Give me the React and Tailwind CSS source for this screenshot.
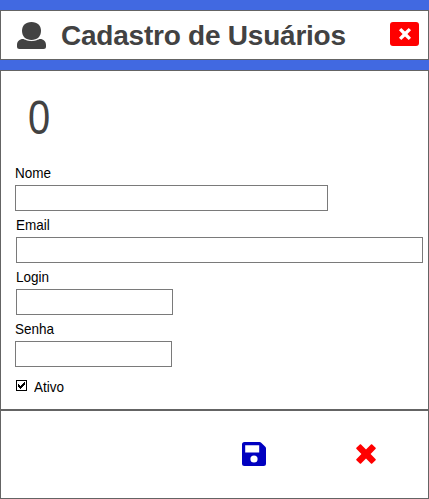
import React from 'react';

function UserIcon() {
  return (
    <svg className="mt-[11px] ml-4 h-[27px] w-[29px] shrink-0" viewBox="0 0 29 27" fill="#424242">
      <path d="M6 17C8 17 10 18.9 14.5 18.9C19 18.9 21 17 23 17C26.5 17 29 19.4 29 23V24.5Q29 27 26.5 27H2.5Q0 27 0 24.5V23C0 19.4 2.5 17 6 17Z" />
      <path d="M14.5 0C20.6 0 24 3.6 24 8.8C24 14.2 20.6 18 14.5 18C8.4 18 5 14.2 5 8.8C5 3.6 8.4 0 14.5 0Z" />
      <path d="M6.5 16.7C9 17.6 10.5 18.6 14.5 18.6C18.5 18.6 20 17.6 22.5 16.7" fill="none" stroke="white" strokeWidth="0.6" />
    </svg>
  );
}

function CloseIcon() {
  return (
    <svg className="h-3 w-3" viewBox="0 0 20 20" fill="currentColor">
      <path d="M4.2 .3L10 5.9L15.8 .3Q16.2 0 16.6 .4L19.7 3.5Q20 3.9 19.7 4.3L14 10L19.7 15.7Q20 16.1 19.7 16.5L16.6 19.6Q16.2 20 15.8 19.7L10 14.1L4.2 19.7Q3.8 20 3.4 19.6L.3 16.5Q0 16.1 .3 15.7L6 10L.3 4.3Q0 3.9 .3 3.5L3.4 .4Q3.8 0 4.2 .3Z" />
    </svg>
  );
}

function CancelIcon() {
  return (
    <svg className="h-5 w-5" viewBox="0 0 20 20" fill="currentColor">
      <path d="M4.8 .3L10 5.4L15.2 .3Q15.7 0 16.2 .4L19.6 3.8Q20 4.3 19.7 4.8L14.6 10L19.7 15.2Q20 15.7 19.6 16.2L16.2 19.6Q15.7 20 15.2 19.7L10 14.6L4.8 19.7Q4.3 20 3.8 19.6L.4 16.2Q0 15.7 .3 15.2L5.4 10L.3 4.8Q0 4.3 .4 3.8L3.8 .4Q4.3 0 4.8 .3Z" />
    </svg>
  );
}

function SaveIcon() {
  return (
    <svg className="h-6 w-6" viewBox="0 0 24 24" fill="currentColor" fillRule="evenodd">
      <path d="M2.5 0H17.5Q18.5 0 19.2 .7L23.3 4.8Q24 5.5 24 6.5V21.5Q24 24 21.5 24H2.5Q0 24 0 21.5V2.5Q0 0 2.5 0ZM3.2 3.2V10.6H17.2V3.2ZM12 13.4A3.6 3.6 0 1 0 12 20.6A3.6 3.6 0 1 0 12 13.4Z" />
    </svg>
  );
}

function Label({ children }) {
  return (
    <span className="block origin-left scale-x-90 text-[15px] leading-[26px] whitespace-nowrap text-black">
      {children}
    </span>
  );
}

function Field({ label, className, inputClassName }) {
  return (
    <label className={className}>
      <Label>{label}</Label>
      <input className={`block h-[26px] border border-[#7a7a7a] bg-white px-1 text-sm outline-none ${inputClassName}`} />
    </label>
  );
}

export default function App() {
  return (
    <div className="flex h-[499px] w-[429px] flex-col overflow-hidden bg-[#4169e1] pt-[10px] font-['Liberation_Sans',Arial,sans-serif]">
      <header className="mb-[10px] flex h-[50px] shrink-0 items-start border border-[#646464] bg-white">
        <UserIcon />
        <h1 className="mt-[8px] ml-[15px] text-[28px] leading-[34px] font-bold tracking-[-0.23px] whitespace-nowrap text-[#424242]">
          Cadastro de Usuários
        </h1>
        <button className="mt-[11px] mr-[9px] ml-auto flex h-[24px] w-[29px] items-center justify-center rounded-[3px] bg-[#ff0000] text-white" aria-label="Fechar">
          <CloseIcon />
        </button>
      </header>

      <main className="flex h-[340px] shrink-0 flex-col items-start border border-[#646464] bg-white pt-5">
        <span className="ml-[27px] block h-[69px] origin-left scale-x-[0.83] text-[48px] leading-[53px] text-[#424242]">0</span>
        <Field label="Nome" className="ml-[14px]" inputClassName="-mt-px w-[313px]" />
        <Field label="Email" className="ml-[15px] mt-px" inputClassName="-mt-px w-[407px]" />
        <Field label="Login" className="ml-[15px] mt-px" inputClassName="-mt-px w-[157px]" />
        <Field label="Senha" className="ml-[14px] mt-px" inputClassName="-mt-px w-[157px]" />
        <label className="mt-[7px] ml-[15px] flex items-center">
          <svg className="mr-[7px] -mt-[4px] h-[11px] w-[11px]" viewBox="0 0 11 11" shapeRendering="crispEdges">
            <rect x="0.5" y="0.5" width="10" height="10" fill="white" stroke="black" />
            <path d="M2 4h1v1h1v1h1v-1h1v-1h1v-1h1v-1h1v3h-1v1h-1v1h-1v1h-1v1h-1v-1h-1v-1h-1z" fill="black" />
          </svg>
          <Label>Ativo</Label>
        </label>
      </main>

      <footer className="flex h-[89px] shrink-0 items-start border border-[#646464] bg-white">
        <button className="mt-[31px] ml-[241px] text-[#0000c0]" aria-label="Salvar">
          <SaveIcon />
        </button>
        <button className="mt-[33px] ml-[90px] text-[#ff0000]" aria-label="Cancelar">
          <CancelIcon />
        </button>
      </footer>
    </div>
  );
}
